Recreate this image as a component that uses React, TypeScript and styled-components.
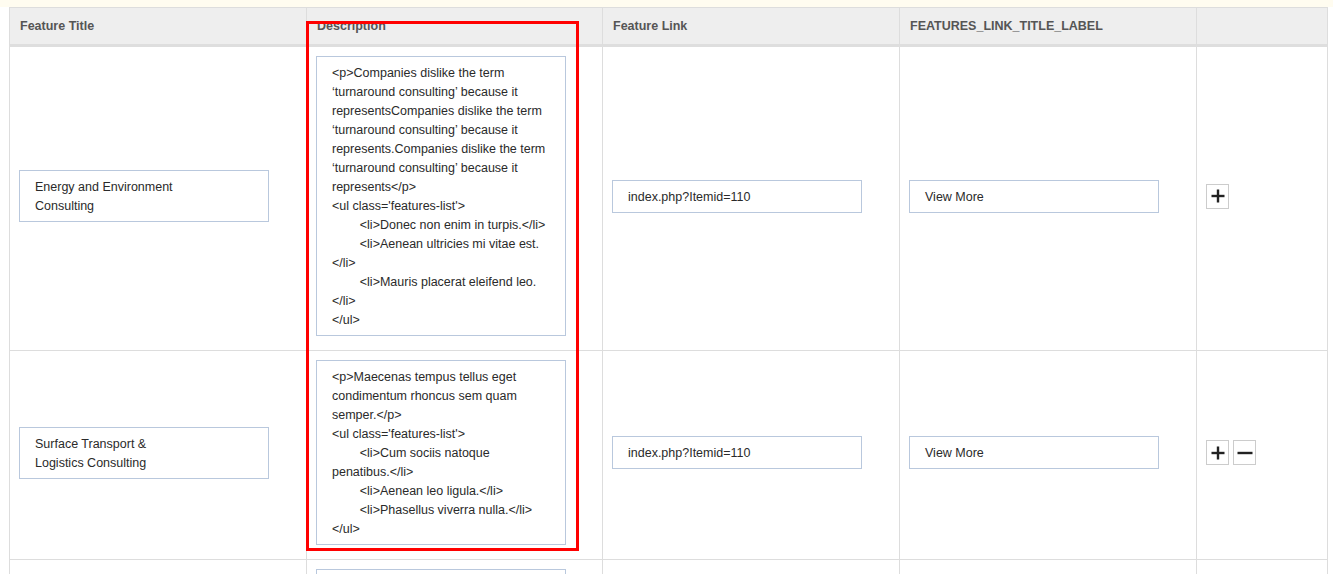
import React from "react";
import styled, { createGlobalStyle } from "styled-components";

const Global = createGlobalStyle`
  html, body { margin: 0; padding: 0; background: #fff; }
  body { font-family: "Liberation Sans", Arial, sans-serif; overflow: hidden; }
`;

const Page = styled.div`
  position: relative;
  width: 1333px;
  min-height: 574px;
`;

const Notice = styled.div`
  height: 7px;
  background: #fffcf0;
`;

const Table = styled.div`
  margin-left: 9px;
  width: 1319px;
  display: grid;
  grid-template-columns: 297px 296px 297px 297px 132px;
`;

const HeadCell = styled.div<{ $last?: boolean }>`
  box-sizing: border-box;
  height: 40px;
  padding: 0 10px 1px;
  display: flex;
  align-items: center;
  background: #eeeeee;
  border-top: 1px solid #dddddd;
  border-left: 1px solid #dddddd;
  border-right: ${(p) => (p.$last ? "1px solid #dddddd" : "0")};
  border-bottom: 3px solid #dedede;
  font-size: 12.5px;
  font-weight: bold;
  color: #555555;
  white-space: nowrap;
`;

const Cell = styled.div<{ $last?: boolean }>`
  box-sizing: border-box;
  padding: 9px 9px 14px;
  display: flex;
  align-items: center;
  gap: 4px;
  border-left: 1px solid #dddddd;
  border-right: ${(p) => (p.$last ? "1px solid #dddddd" : "0")};
  border-bottom: 1px solid #dddddd;
`;

const Field = styled.div`
  box-sizing: border-box;
  width: 250px;
  padding: 7px 15px 5px;
  border: 1px solid #b9c8dd;
  background: #fff;
  font-size: 12.5px;
  line-height: 19px;
  color: #2a2a2a;
  white-space: pre-wrap;
  tab-size: 8;
`;

const IconButton = styled.button`
  box-sizing: border-box;
  width: 23px;
  height: 25px;
  padding: 0;
  border: 1px solid #cccccc;
  background: #ffffff;
  display: flex;
  align-items: center;
  justify-content: center;
  cursor: pointer;
`;

const Highlight = styled.div`
  position: absolute;
  left: 306px;
  top: 21px;
  width: 273px;
  height: 530px;
  box-sizing: border-box;
  border: 3px solid #ff0000;
  pointer-events: none;
`;

const PlusIcon = () => (
  <svg width="14" height="14" viewBox="0 0 14 14">
    <rect x="0.5" y="5.8" width="13" height="2.4" fill="#222" />
    <rect x="5.8" y="0.5" width="2.4" height="13" fill="#222" />
  </svg>
);

const MinusIcon = () => (
  <svg width="16" height="14" viewBox="0 0 16 14">
    <rect x="0.5" y="5.8" width="15" height="2.4" fill="#222" />
  </svg>
);

type Row = { title: string; desc: string; link: string; label: string; minus: boolean };

const rows: Row[] = [
  {
    title: "Energy and Environment\nConsulting",
    desc:
      "<p>Companies dislike the term\n\u2018turnaround consulting\u2019 because it\nrepresentsCompanies dislike the term\n\u2018turnaround consulting\u2019 because it\nrepresents.Companies dislike the term\n\u2018turnaround consulting\u2019 because it\nrepresents</p>\n<ul class='features-list'>\n\t<li>Donec non enim in turpis.</li>\n\t<li>Aenean ultricies mi vitae est.\n</li>\n\t<li>Mauris placerat eleifend leo.\n</li>\n</ul>",
    link: "index.php?Itemid=110",
    label: "View More",
    minus: false,
  },
  {
    title: "Surface Transport &\nLogistics Consulting",
    desc:
      "<p>Maecenas tempus tellus eget\ncondimentum rhoncus sem quam\nsemper.</p>\n<ul class='features-list'>\n\t<li>Cum sociis natoque\npenatibus.</li>\n\t<li>Aenean leo ligula.</li>\n\t<li>Phasellus viverra nulla.</li>\n</ul>",
    link: "index.php?Itemid=110",
    label: "View More",
    minus: true,
  },
  {
    title: "Project Management\nConsulting",
    desc:
      "<p>Nulla facilisi. Sed ut perspiciatis\nunde omnis iste natus error.</p>\n<ul class='features-list'>\n\t<li>Donec non enim in turpis.</li>\n\t<li>Aenean leo ligula.</li>\n</ul>",
    link: "index.php?Itemid=110",
    label: "View More",
    minus: true,
  },
];

export default function App() {
  return (
    <Page>
      <Global />
      <Notice />
      <Table>
        <HeadCell>Feature Title</HeadCell>
        <HeadCell>Description</HeadCell>
        <HeadCell>Feature Link</HeadCell>
        <HeadCell>FEATURES_LINK_TITLE_LABEL</HeadCell>
        <HeadCell $last />
        {rows.map((r, i) => (
          <React.Fragment key={i}>
            <Cell>
              <Field>{r.title}</Field>
            </Cell>
            <Cell>
              <Field>{r.desc}</Field>
            </Cell>
            <Cell>
              <Field>{r.link}</Field>
            </Cell>
            <Cell>
              <Field>{r.label}</Field>
            </Cell>
            <Cell $last>
              <IconButton aria-label="add">
                <PlusIcon />
              </IconButton>
              {r.minus && (
                <IconButton aria-label="remove">
                  <MinusIcon />
                </IconButton>
              )}
            </Cell>
          </React.Fragment>
        ))}
      </Table>
      <Highlight />
    </Page>
  );
}
